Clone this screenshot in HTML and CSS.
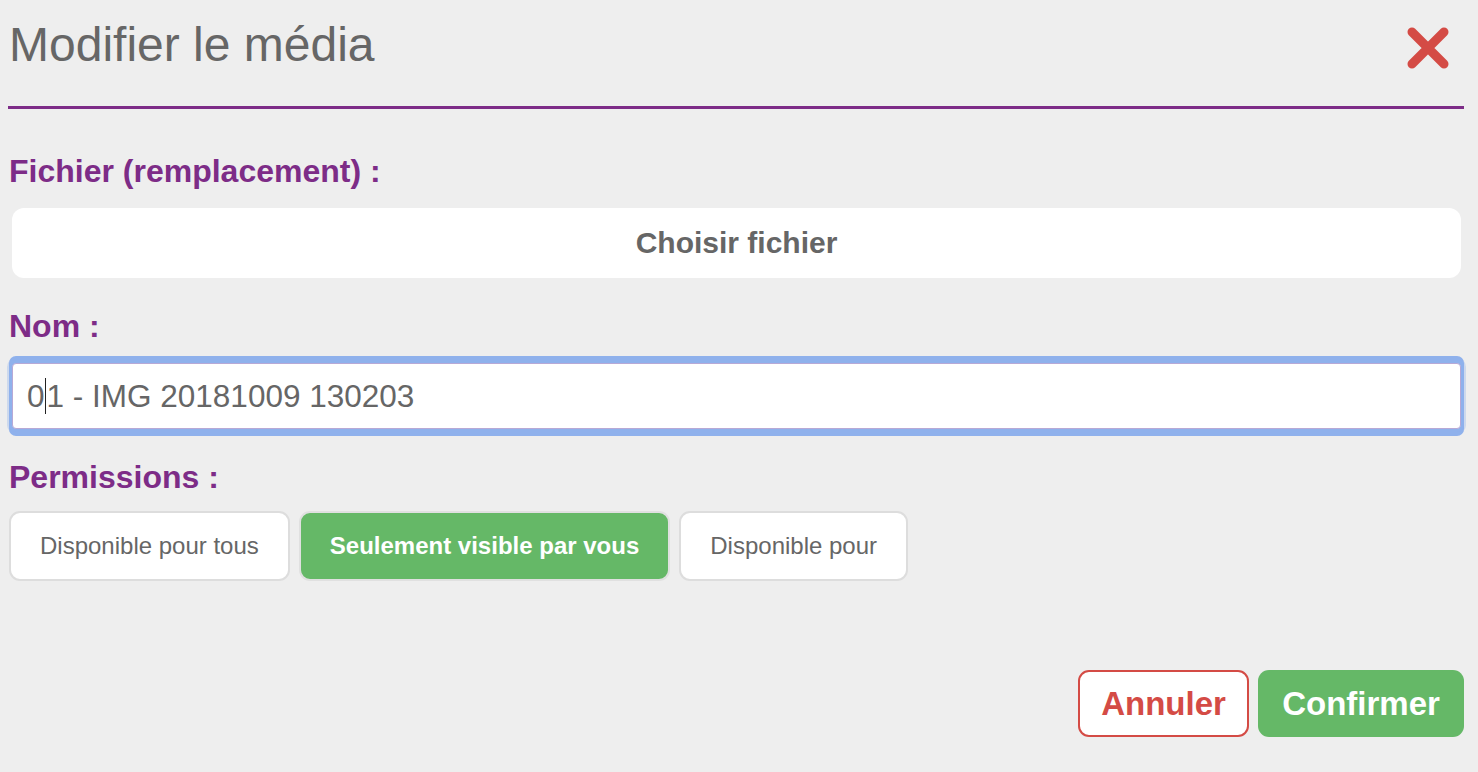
FILE: index.html
```html
<!DOCTYPE html>
<html lang="fr">
<head>
<meta charset="utf-8">
<title>Modifier le média</title>
<link rel="stylesheet" href="styles.css">
</head>
<body>
<div class="modal">
  <header class="modal-header">
    <h1 class="modal-title">Modifier le média</h1>
    <button class="close-btn" aria-label="Fermer">
      <svg width="42" height="42" viewBox="0 0 42 42">
        <path d="M5 5 L37 37 M37 5 L5 37" stroke="#d44b45" stroke-width="9" stroke-linecap="round" fill="none"/>
      </svg>
    </button>
  </header>

  <label class="field-label label-first">Fichier (remplacement) :</label>
  <div class="file-btn">Choisir fichier</div>

  <label class="field-label">Nom :</label>
  <div class="text-input">0<span class="caret"></span>1 - IMG 20181009 130203</div>

  <label class="field-label label-perm">Permissions :</label>
  <div class="perm-group">
    <button class="perm-btn">Disponible pour tous</button>
    <button class="perm-btn active">Seulement visible par vous</button>
    <button class="perm-btn">Disponible pour</button>
  </div>

  <div class="footer">
    <button class="btn btn-cancel">Annuler</button>
    <button class="btn btn-confirm">Confirmer</button>
  </div>
</div>
</body>
</html>
```

FILE: styles.css
```css
html, body {
  margin: 0;
  padding: 0;
  background: #eeeeee;
}

body {
  font-family: "Liberation Sans", Arial, Helvetica, sans-serif;
  color: #666666;
}

.modal {
  width: 1456px;
  margin-left: 8px;
  display: flex;
  flex-direction: column;
}

.modal-header {
  display: flex;
  justify-content: space-between;
  align-items: flex-start;
  height: 85px;
  padding-top: 21px;
  border-bottom: 3px solid #7d2c87;
}

.modal-title {
  margin: 0 0 0 1px;
  font-size: 48px;
  line-height: 48px;
  font-weight: normal;
  color: #666666;
}

.close-btn {
  border: 0;
  background: none;
  padding: 0;
  margin: 6px 15px 0 0;
  width: 42px;
  height: 42px;
  display: block;
}

.close-btn svg {
  display: block;
}

.field-label {
  display: block;
  margin: 32px 0 0 1px;
  font-size: 32px;
  line-height: 32px;
  font-weight: bold;
  color: #7d2c87;
}

.label-first {
  margin-top: 46px;
}

.file-btn {
  margin: 21px 3px 0 4px;
  height: 70px;
  background: #ffffff;
  border-radius: 12px;
  display: flex;
  align-items: center;
  justify-content: center;
  font-size: 30px;
  font-weight: bold;
  color: #666666;
}

.text-input {
  margin: 21px 3px 0 4px;
  height: 66px;
  box-sizing: border-box;
  background: #ffffff;
  border: 1px solid #b7a9d6;
  border-radius: 4px;
  box-shadow: 0 0 0 3px #8fb1ec, 0 -4px 0 3px #8fb1ec, 0 4px 0 3px #8fb1ec, 0 0 0 5px rgba(143, 177, 236, 0.35);
  padding-left: 14px;
  display: flex;
  align-items: center;
  font-size: 31.5px;
  color: #666666;
  white-space: pre;
}

.caret {
  display: inline-block;
  width: 1px;
  height: 36px;
  background: #222222;
  margin: 0 1px 0 0;
}

.label-perm {
  margin-top: 32px;
}

.perm-group {
  display: flex;
  gap: 9px;
  margin: 18px 0 0 1px;
}

.perm-btn {
  height: 70px;
  box-sizing: border-box;
  padding: 0 29px;
  border: 2px solid #dddddd;
  border-radius: 11px;
  background: #ffffff;
  font-family: "Liberation Sans", Arial, Helvetica, sans-serif;
  font-size: 24px;
  color: #666666;
}

.perm-btn.active {
  background: #65b867;
  border-color: #e0e0e0;
  color: #ffffff;
  font-weight: bold;
}

.footer {
  display: flex;
  justify-content: flex-end;
  gap: 9px;
  margin-top: 89px;
}

.btn {
  height: 67px;
  box-sizing: border-box;
  border-radius: 11px;
  font-family: "Liberation Sans", Arial, Helvetica, sans-serif;
  font-size: 33px;
  font-weight: bold;
}

.btn-cancel {
  background: #ffffff;
  border: 2px solid #d44b45;
  color: #d44b45;
  padding: 0 20px;
  width: 171px;
}

.btn-confirm {
  background: #65b867;
  border: 0;
  color: #ffffff;
  padding: 0 22px;
  width: 206px;
}
```
